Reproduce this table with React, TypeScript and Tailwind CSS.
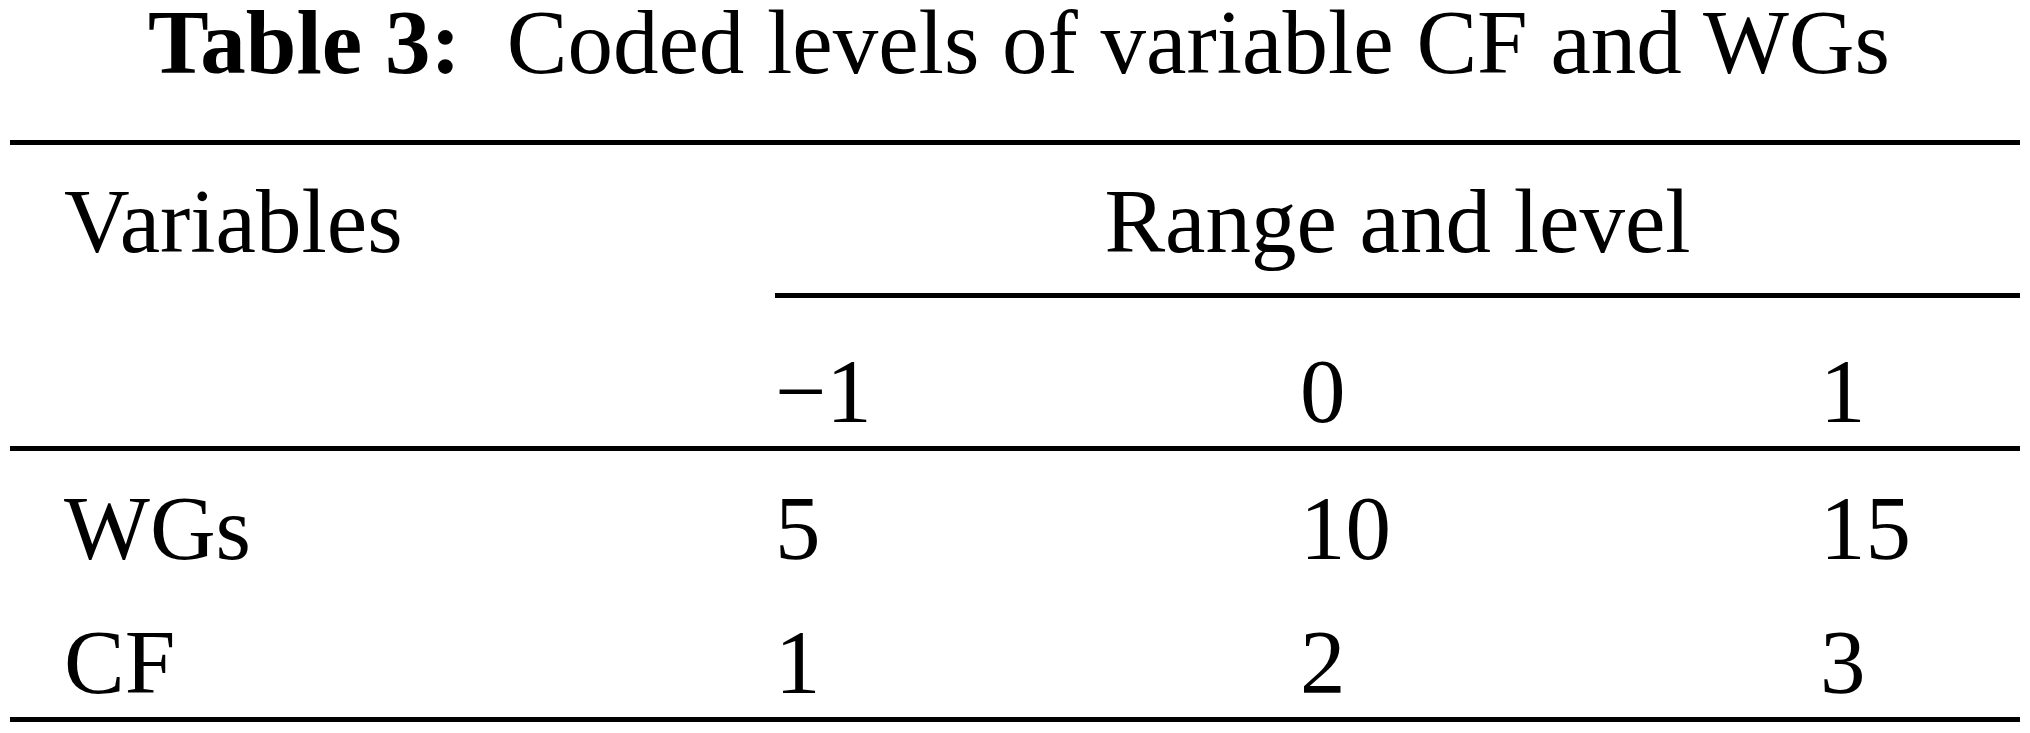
export default function App() {
  const cols = "grid grid-cols-[765px_525px_520px_200px] leading-[90px]";
  return (
    <div className="w-[2030px] h-[733px] overflow-hidden bg-white text-black font-['Liberation_Serif','Times_New_Roman',serif] text-[91px] leading-[90px]">
      <div className="text-center whitespace-nowrap leading-[86px] pl-[8px]">
        <span className="font-bold">Table 3:</span>
        <span className="ml-[46px]">Coded levels of variable CF and WGs</span>
      </div>
      <div className="mx-[10px] w-[2010px]">
        <div className="mt-[54px] h-[5px] bg-black" />
        <div className={`${cols} mt-[32px]`}>
          <div className="pl-[54px]">Variables</div>
          <div className="col-span-3 text-center">Range and level</div>
        </div>
        <div className={`${cols} mt-[26px]`}>
          <div />
          <div className="col-span-3 h-[5px] bg-black" />
        </div>
        <div className={`${cols} mt-[49px]`}>
          <div className="pl-[54px]" />
          <div>−1</div>
          <div>0</div>
          <div>1</div>
        </div>
        <div className="mt-[9px] h-[5px] bg-black" />
        <div className={`${cols} mt-[33px]`}>
          <div className="pl-[54px]">WGs</div>
          <div>5</div>
          <div>10</div>
          <div>15</div>
        </div>
        <div className={`${cols} mt-[44px]`}>
          <div className="pl-[54px]">CF</div>
          <div>1</div>
          <div>2</div>
          <div>3</div>
        </div>
        <div className="mt-[9px] h-[5px] bg-black" />
      </div>
    </div>
  );
}
